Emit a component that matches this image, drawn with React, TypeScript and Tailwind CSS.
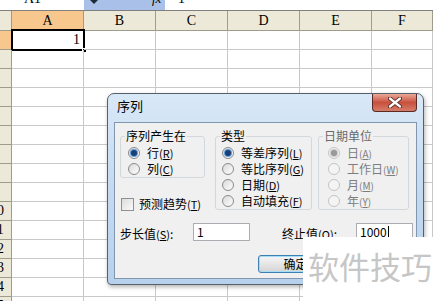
import React from "react";

const COLS = ["A", "B", "C", "D", "E", "F"];
const sheetFont = { fontFamily: "'Liberation Serif', 'DejaVu Serif', serif" };
const uiFont = { fontFamily: "'Noto Sans CJK SC', 'Liberation Sans', sans-serif" };

function Radio({ checked, disabled }: { checked?: boolean; disabled?: boolean }) {
  return (
    <span
      className={`relative inline-block w-[12px] h-[12px] shrink-0 rounded-full border ${
        disabled
          ? "border-[#c4c4c4] bg-[#f4f4f4]"
          : "border-[#8a8a8a] bg-gradient-to-br from-[#d9d9d9] to-[#ffffff]"
      }`}
    >
      {checked && (
        <span
          className={`absolute left-[2px] top-[2px] w-[6px] h-[6px] rounded-full ${
            disabled ? "bg-[#9a9a9a] ring-1 ring-[#c8c8c8]" : "bg-[#1b3f73] ring-1 ring-[#5b9be0]"
          }`}
        />
      )}
    </span>
  );
}

function Acc({ text, k, gray }: { text: string; k: string; gray?: boolean }) {
  return (
    <span className={`text-[12px] leading-[14px] whitespace-nowrap ${gray ? "text-[#7d7d7d]" : "text-black"}`}>
      {text}
      <span className={gray ? "text-[10px]" : "text-[11px]"}>
        (<span className="underline">{k}</span>)
      </span>
    </span>
  );
}

function RadioRow({ text, k, checked, disabled }: { text: string; k: string; checked?: boolean; disabled?: boolean }) {
  return (
    <div className="flex h-[16px] items-center gap-[7px]">
      <Radio checked={checked} disabled={disabled} />
      <Acc text={text} k={k} gray={disabled} />
    </div>
  );
}

function Group({
  label,
  gray,
  className,
  children,
}: {
  label: string;
  gray?: boolean;
  className: string;
  children: React.ReactNode;
}) {
  return (
    <div className={`relative rounded-[3px] border border-[#d3d8dd] pt-[8px] ${className}`}>
      <span
        className={`absolute left-[4px] top-[-8px] bg-[#f0f0f0] px-[1px] text-[12px] leading-[14px] ${
          gray ? "text-[#6a6a6a]" : "text-black"
        }`}
      >
        {label}
      </span>
      {children}
    </div>
  );
}

export default function App() {
  const rows = Array.from({ length: 15 }, (_, i) => i + 1);
  return (
    <div className="relative w-[433px] h-[301px] overflow-hidden bg-white" style={sheetFont}>
      {/* formula bar */}
      <div className="flex h-[11px] border-b border-[#7f7f7f] overflow-hidden text-[14px] leading-[14px]">
        <div className="relative w-[84px] bg-white">
          <span className="absolute left-[24px] top-[-8px]">A1</span>
        </div>
        <div className="relative w-[81px] bg-[#a9c1e9]">
          <svg className="absolute left-[6px] top-[0px]" width="8" height="4" viewBox="0 0 8 4">
            <path d="M0 0 H8 L4 4 Z" fill="#1f2a3a" />
          </svg>
          <span className="absolute left-[68px] top-[-8px] italic text-[13px]">fx</span>
        </div>
        <div className="relative flex-1 bg-white">
          <span className="absolute left-[13px] top-[-8px]">1</span>
        </div>
      </div>

      {/* grid */}
      <div className="grid grid-cols-[12px_repeat(5,72px)_1fr] text-[14px]">
        <div className="h-[20px] bg-[#ece9d8] border-r border-b border-[#a09c8c]" />
        {COLS.map((c, i) => (
          <div
            key={c}
            className={`h-[20px] flex items-center justify-center border-r border-b border-[#a09c8c] ${
              i === 0 ? "bg-[#f8c78d]" : "bg-[#ece9d8]"
            }`}
          >
            {c}
          </div>
        ))}
        {rows.map((r) => (
          <React.Fragment key={r}>
            <div
              className={`relative h-[19px] overflow-hidden border-r border-b border-[#a09c8c] ${
                r === 1 ? "bg-[#f8c78d]" : "bg-[#ece9d8]"
              }`}
            >
              <span className="absolute left-[-17px] top-[1px] w-[28px] text-center leading-[16px]">
                {r >= 10 ? r : ""}
              </span>
            </div>
            {COLS.map((c, i) => (
              <div key={c} className="relative h-[19px] border-r border-b border-[#c9c9c9]">
                {r === 1 && i === 0 && (
                  <>
                    <span className="absolute right-[3px] top-[1px] leading-[16px]">1</span>
                    <span className="absolute left-[-1px] top-[-2px] right-[-2px] bottom-[-2px] border-2 border-black" />
                    <span className="absolute right-[-4px] bottom-[-4px] w-[5px] h-[5px] bg-black border border-white" />
                  </>
                )}
              </div>
            ))}
          </React.Fragment>
        ))}
      </div>

      {/* dialog */}
      <div
        className="absolute left-[107px] top-[93px] w-[317px] h-[192px] flex flex-col rounded-t-[7px] rounded-b-[4px] border border-[#56606d] bg-gradient-to-b from-[#d9e8f7] via-[#c5daf0] to-[#b7d1ec] shadow-[1px_2px_4px_rgba(0,0,0,0.3)]"
        style={uiFont}
      >
        <div className="flex h-[28px] items-start justify-between pl-[9px] pr-[6px]">
          <span className="mt-[4px] text-[13px] leading-[16px] text-black">序列</span>
          <div className="flex h-[18px] w-[45px] items-center justify-center rounded-b-[4px] border border-t-0 border-[#5a2a24] bg-gradient-to-b from-[#e9a898] via-[#c8503e] to-[#d47c68]">
            <svg width="14" height="11" viewBox="0 0 14 11">
              <path d="M2 1.5 L12 9.5 M12 1.5 L2 9.5" stroke="#4a1a14" strokeWidth="4" strokeLinecap="round" />
              <path d="M2 1.5 L12 9.5 M12 1.5 L2 9.5" stroke="#ffffff" strokeWidth="2.4" strokeLinecap="round" />
            </svg>
          </div>
        </div>
        <div className="mx-[6px] mb-[5px] h-[157px] border border-[#8197b0] bg-[#f0f0f0]">
          {/* top groups */}
          <div className="flex pl-[5px] pt-[13px]">
            <div className="flex w-[85px] flex-col">
              <Group label="序列产生在" className="h-[42px] pl-[7px]">
                <RadioRow text="行" k="R" checked />
                <RadioRow text="列" k="C" />
              </Group>
              <div className="ml-[1px] mt-[19px] flex items-center gap-[5px]">
                <span className="inline-block h-[13px] w-[13px] border border-[#8e8f8f] bg-gradient-to-br from-[#dcdcdc] to-[#fafafa]" />
                <Acc text="预测趋势" k="T" />
              </div>
            </div>
            <Group label="类型" className="ml-[10px] h-[74px] w-[97px] pl-[6px]">
              <RadioRow text="等差序列" k="L" checked />
              <RadioRow text="等比序列" k="G" />
              <RadioRow text="日期" k="D" />
              <RadioRow text="自动填充" k="F" />
            </Group>
            <Group label="日期单位" gray className="ml-[6px] h-[74px] w-[91px] pl-[9px]">
              <RadioRow text="日" k="A" checked disabled />
              <RadioRow text="工作日" k="W" disabled />
              <RadioRow text="月" k="M" disabled />
              <RadioRow text="年" k="Y" disabled />
            </Group>
          </div>
          {/* values */}
          <div className="mt-[12px] flex h-[18px] items-center pl-[5px]">
            <span className="w-[73px]">
              <Acc text="步长值" k="S" />
              <span className="text-[12px]">:</span>
            </span>
            <div className="flex h-[18px] w-[57px] items-center border border-[#abadb3] bg-white pl-[3px] text-[12px]">1</div>
            <span className="ml-[32px] w-[74px]">
              <Acc text="终止值" k="O" />
              <span className="text-[12px]">:</span>
            </span>
            <div className="flex h-[18px] w-[57px] items-center border border-[#abadb3] bg-white pl-[3px] text-[12px]">
              1000<span className="ml-[1px] inline-block h-[12px] w-[1px] bg-black" />
            </div>
          </div>
          {/* button */}
          <div className="mt-[14px] pl-[143px]">
            <div className="flex h-[18px] w-[75px] items-center justify-center rounded-[3px] border border-[#3c7fb1] bg-gradient-to-b from-[#f6f6f6] via-[#e6e6e6] to-[#d3d3d3] text-[12px] leading-[14px] shadow-[inset_0_0_0_1px_#a6dcf5]">
              确定
            </div>
          </div>
        </div>
      </div>

      {/* watermark */}
      <div
        className="absolute left-[303px] top-[237px] h-[64px] w-[130px] bg-white pl-[5px] pt-[12px] text-[31px] leading-[34px] text-[#c6c6c6]"
        style={uiFont}
      >
        软件技巧
      </div>
    </div>
  );
}
